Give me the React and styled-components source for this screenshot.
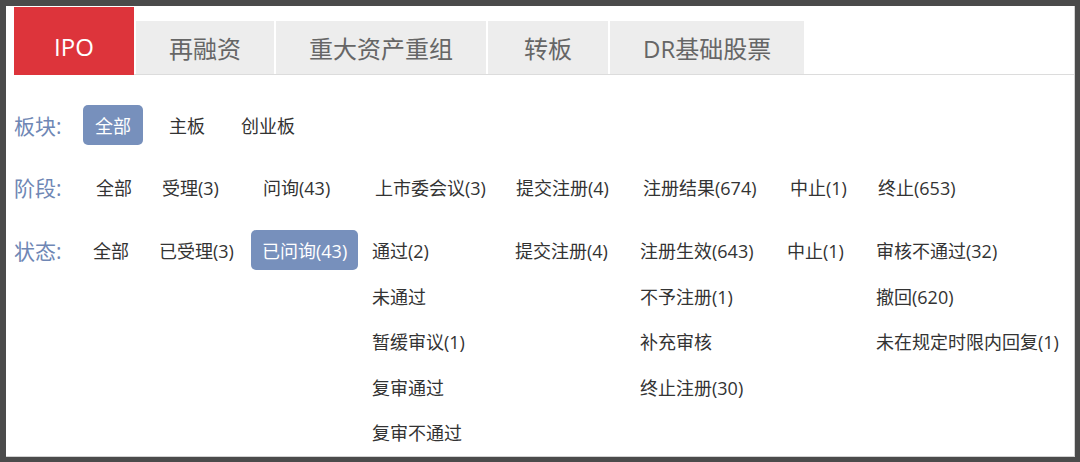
import React from "react";
import styled, { createGlobalStyle } from "styled-components";

const GlobalStyle = createGlobalStyle`
  html, body {
    margin: 0;
    padding: 0;
    background: #4b4b4b;
  }
  body {
    font-family: "Open Sans", "Noto Sans CJK SC", sans-serif;
  }
`;

const tabs = [
  { label: "IPO", active: true },
  { label: "再融资" },
  { label: "重大资产重组" },
  { label: "转板" },
  { label: "DR基础股票" },
];

const boardItems = [
  { text: "全部", w: 74, active: true },
  { text: "主板", w: 72 },
  { text: "创业板" },
];

const stageItems = [
  { text: "全部", w: 66 },
  { text: "受理(3)", w: 101 },
  { text: "问询(43)", w: 112 },
  { text: "上市委会议(3)", w: 141 },
  { text: "提交注册(4)", w: 127 },
  { text: "注册结果(674)", w: 147 },
  { text: "中止(1)", w: 88 },
  { text: "终止(653)" },
];

const statusItems = [
  { text: "全部", w: 66 },
  { text: "已受理(3)", w: 104 },
  { text: "已问询(43)", w: 109, active: true },
];

const statusColumns = [
  { w: 143, items: ["通过(2)", "未通过", "暂缓审议(1)", "复审通过", "复审不通过"] },
  { w: 125, items: ["提交注册(4)"] },
  { w: 147, items: ["注册生效(643)", "不予注册(1)", "补充审核", "终止注册(30)"] },
  { w: 89, items: ["中止(1)"] },
  { items: ["审核不通过(32)", "撤回(620)", "未在规定时限内回复(1)"] },
];

export default function App() {
  return (
    <>
      <GlobalStyle />
      <Panel>
        <TabBar>
          {tabs.map((t) => (
            <Tab key={t.label} $active={t.active}>
              {t.label}
            </Tab>
          ))}
        </TabBar>

        <FilterRow $top={30}>
          <Label $w={69}>板块:</Label>
          {boardItems.map((it) => (
            <Cell key={it.text} $w={it.w}>
              <Chip $active={it.active}>{it.text}</Chip>
            </Cell>
          ))}
        </FilterRow>

        <FilterRow $top={22}>
          <Label $w={70}>阶段:</Label>
          {stageItems.map((it) => (
            <Cell key={it.text} $w={it.w}>
              <Chip>{it.text}</Chip>
            </Cell>
          ))}
        </FilterRow>

        <FilterRow $top={23}>
          <Label $w={67}>状态:</Label>
          {statusItems.map((it) => (
            <Cell key={it.text} $w={it.w}>
              <Chip $active={it.active}>{it.text}</Chip>
            </Cell>
          ))}
          {statusColumns.map((col, i) => (
            <Column key={i} $w={col.w}>
              {col.items.map((text) => (
                <Chip key={text}>{text}</Chip>
              ))}
            </Column>
          ))}
        </FilterRow>
      </Panel>
    </>
  );
}

const Panel = styled.div`
  margin: 6px 5px 5px 6px;
  width: 1069px;
  height: 451px;
  box-sizing: border-box;
  padding: 1px 0 0 8px;
  background: #fff;
  border-right: 1px solid #d2d2d2;
  border-bottom: 1px solid #d2d2d2;
  overflow: hidden;
`;

const TabBar = styled.div`
  display: flex;
  align-items: flex-end;
  height: 67px;
  border-bottom: 1px solid #dcdcdc;
`;

const Tab = styled.div`
  display: flex;
  align-items: center;
  justify-content: center;
  box-sizing: border-box;
  min-width: 120px;
  padding: ${(p) => (p.$active ? "10px 33px 0" : "0 33px")};
  margin-right: 2px;
  font-size: 24px;
  white-space: nowrap;
  height: ${(p) => (p.$active ? "68px" : "53px")};
  margin-bottom: ${(p) => (p.$active ? "-1px" : "0")};
  background: ${(p) => (p.$active ? "#dd343b" : "#ededed")};
  color: ${(p) => (p.$active ? "#fff" : "#666")};
`;

const FilterRow = styled.div`
  display: flex;
  align-items: flex-start;
  margin-top: ${(p) => p.$top}px;
`;

const Label = styled.div`
  width: ${(p) => p.$w}px;
  flex-shrink: 0;
  height: 40px;
  line-height: 42px;
  font-size: 21px;
  color: #6f87b5;
  white-space: nowrap;
`;

const Cell = styled.div`
  flex-shrink: 0;
  width: ${(p) => (p.$w ? `${p.$w}px` : "auto")};
`;

const Column = styled.div`
  flex-shrink: 0;
  width: ${(p) => (p.$w ? `${p.$w}px` : "auto")};
  display: flex;
  flex-direction: column;
  align-items: flex-start;
  gap: 5.5px;
`;

const Chip = styled.div`
  display: inline-flex;
  align-items: center;
  justify-content: center;
  box-sizing: border-box;
  height: 40px;
  min-width: ${(p) => (p.$active ? "60px" : "0")};
  padding: 0 ${(p) => (p.$active ? "11px" : "12px")};
  border-radius: 5px;
  font-size: 18px;
  white-space: nowrap;
  background: ${(p) => (p.$active ? "#7790bc" : "transparent")};
  color: ${(p) => (p.$active ? "#fff" : "#333")};
`;
